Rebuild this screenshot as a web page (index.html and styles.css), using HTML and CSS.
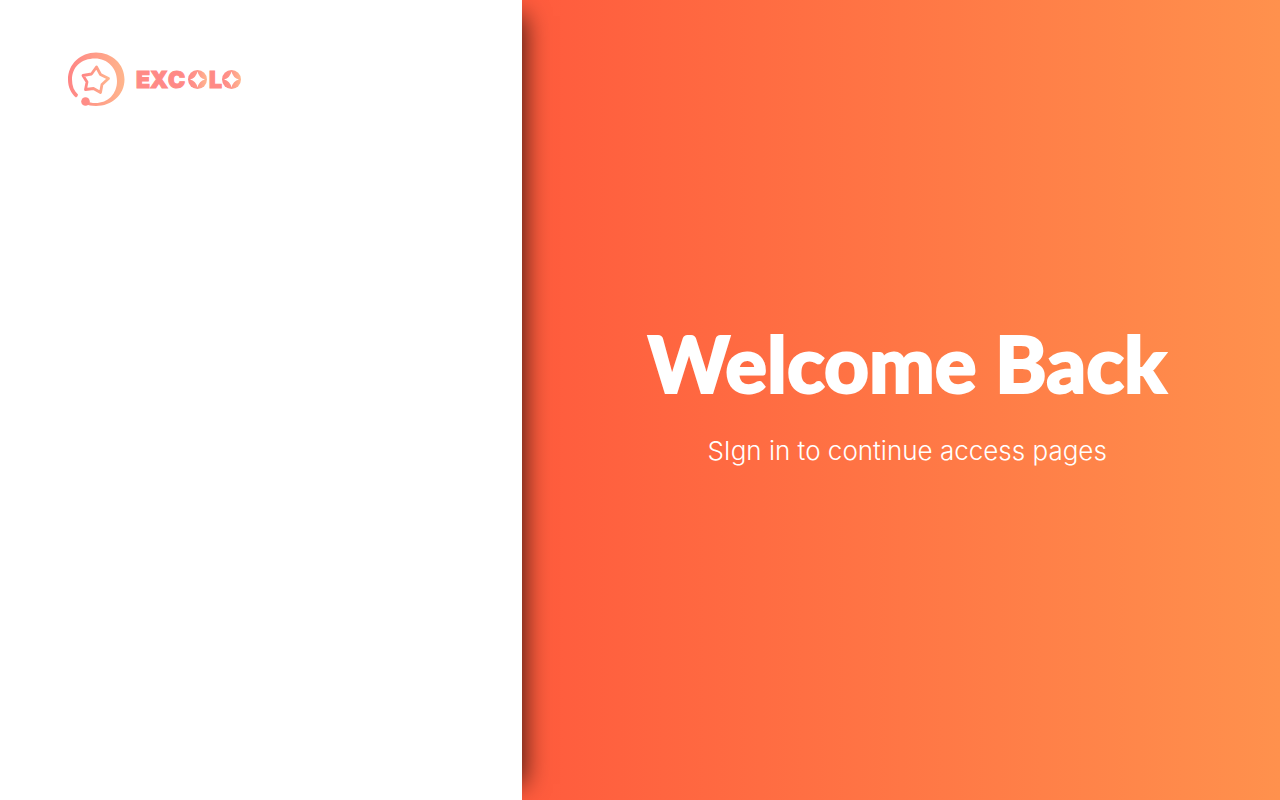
FILE: index.html
```html
<!DOCTYPE html>
<html lang="en">
<head>
<meta charset="utf-8">
<meta name="viewport" content="width=device-width, initial-scale=1">
<title>Excolo</title>
<link rel="stylesheet" href="styles.css">
</head>
<body>
<main class="page">
  <section class="side">
    <svg class="logo" width="176" height="56" viewBox="0 0 176 56" role="img" aria-label="Excolo">
      <defs>
        <linearGradient id="mark" x1="0" y1="0" x2="1" y2="0"><stop offset="0" stop-color="#ff8585"/><stop offset="1" stop-color="#ffb58c"/></linearGradient>
        <linearGradient id="letter" x1="0" y1="0" x2="1" y2="0"><stop offset="0" stop-color="#ff8a86"/><stop offset=".45" stop-color="#ff958a"/><stop offset="1" stop-color="#ffb78f"/></linearGradient>
      </defs>
      <path fill="url(#mark)" d="M8 45.500C3 41.500 0 35 0 27.500C0 12 12.500 .5 28 .5C44 .5 56.500 12 56.500 27.500C56.500 43 43.500 54 28 54C23.500 54 20 53.300 17 52L18 49C21 50.500 24 51 27.500 51C40 51 49 42 49 29C49 16 39.500 6.500 27 6.500C13.500 6.500 4 15 4 27.500C4 34 6 39 10 42.500Q10 44.500 8 45.500Z"/>
      <circle cx="17.500" cy="49.500" r="4.300" fill="#ff8d87"/>
      <path fill="none" stroke="url(#mark)" stroke-width="2.800" stroke-linejoin="round" d="M28.500 15L32.500 22.500L40.500 26.500L34 32.500L32.500 40.500L25.500 36.500L17.500 37.500L19 30L15 23.500L23.500 22Z"/>
      <text class="wordmark" y="36"><tspan x="68">E</tspan><tspan x="82">X</tspan><tspan x="100">C</tspan><tspan x="141">L</tspan></text>
      <circle cx="129.500" cy="27.500" r="9.500" fill="url(#letter)"/>
      <circle cx="163.500" cy="27.500" r="9.500" fill="url(#letter)"/>
      <path id="spark" fill="#fff" d="M129.500 19.500Q131 26 137 27.500Q131 29 129.500 35.500Q128 29 122 27.500Q128 26 129.500 19.500Z"/>
      <use href="#spark" x="34"/>
    </svg>
  </section>
  <section class="welcome">
    <h1 class="title">Welcome Back</h1>
    <p class="subtitle">SIgn in to continue access pages</p>
  </section>
</main>
</body>
</html>
```
FILE: styles.css
```css
* { box-sizing: border-box; }
body { margin: 0; }
.page {
  display: grid;
  grid-template-columns: 40.8% 1fr;
  min-height: 100vh;
}
.side {
  z-index: 1;
  padding: 52px 68px;
  background: #fff;
  box-shadow: 18px 0 24px -16px rgba(0, 0, 0, .75);
}
.logo { display: block; }
.wordmark {
  font: 900 23px Inter, sans-serif;
  fill: #ff8a86;
  stroke: #ff8a86;
  stroke-width: 1px;
}
.welcome {
  display: flex;
  flex-direction: column;
  align-items: center;
  justify-content: center;
  gap: 24px;
  padding: 0 0 18px 12px;
  color: #fff;
  background: linear-gradient(90deg, #ff5b3d, #ff914d);
}
.title {
  margin: 0;
  font: 900 78px/96px Lato, sans-serif;
  -webkit-text-stroke: 2px #fff;
}
.subtitle {
  margin: 0;
  font: 350 26px/32px Inter, sans-serif;
}
```
